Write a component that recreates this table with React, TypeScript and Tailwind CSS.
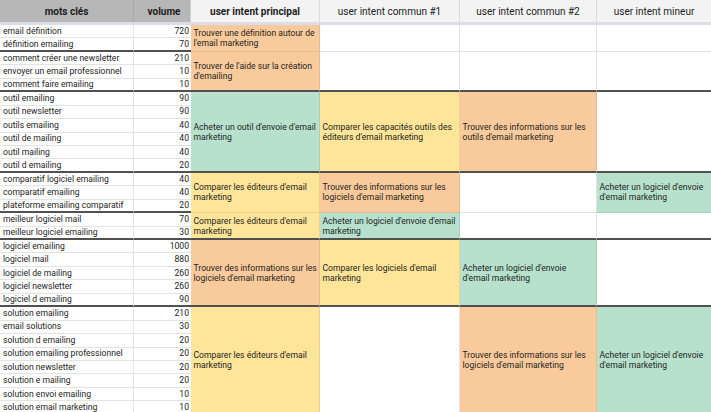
import React from "react";

type Span = { start: number; end: number; color?: "o" | "y" | "g"; lines?: [string, string] };

const rows: [string, string][] = [
  ["email définition", "720"],
  ["définition emailing", "70"],
  ["comment créer une newsletter", "210"],
  ["envoyer un email professionnel", "10"],
  ["comment faire emailing", "10"],
  ["outil emailing", "90"],
  ["outil newsletter", "90"],
  ["outils emailing", "40"],
  ["outil de mailing", "40"],
  ["outil mailing", "40"],
  ["outil d emailing", "20"],
  ["comparatif logiciel emailing", "40"],
  ["comparatif emailing", "40"],
  ["plateforme emailing comparatif", "20"],
  ["meilleur logiciel mail", "70"],
  ["meilleur logiciel emailing", "30"],
  ["logiciel emailing", "1000"],
  ["logiciel mail", "880"],
  ["logiciel de mailing", "260"],
  ["logiciel newsletter", "260"],
  ["logiciel d emailing", "90"],
  ["solution emailing", "210"],
  ["email solutions", "30"],
  ["solution d emailing", "20"],
  ["solution emailing professionnel", "20"],
  ["solution newsletter", "20"],
  ["solution e mailing", "20"],
  ["solution envoi emailing", "10"],
  ["solution email marketing", "10"],
];

const darkAll = [5, 11, 16, 21];
const darkLeft = [2, 5, 11, 14, 16, 21];

const cols: Span[][] = [
  [
    { start: 1, end: 2, color: "o", lines: ["Trouver une définition autour de", "l'email marketing"] },
    { start: 3, end: 5, color: "o", lines: ["Trouver de l'aide sur la création", "d'emailing"] },
    { start: 6, end: 11, color: "g", lines: ["Acheter un outil d'envoie d'email", "marketing"] },
    { start: 12, end: 14, color: "y", lines: ["Comparer les éditeurs d'email", "marketing"] },
    { start: 15, end: 16, color: "y", lines: ["Comparer les éditeurs d'email", "marketing"] },
    { start: 17, end: 21, color: "o", lines: ["Trouver des informations sur les", "logiciels d'email marketing"] },
    { start: 22, end: 29, color: "y", lines: ["Comparer les éditeurs d'email", "marketing"] },
  ],
  [
    { start: 1, end: 2 },
    { start: 3, end: 5 },
    { start: 6, end: 11, color: "y", lines: ["Comparer les capacités outils des", "éditeurs d'email marketing"] },
    { start: 12, end: 14, color: "o", lines: ["Trouver des informations sur les", "logiciels d'email marketing"] },
    { start: 15, end: 16, color: "g", lines: ["Acheter un logiciel d'envoie d'email", "marketing"] },
    { start: 17, end: 21, color: "y", lines: ["Comparer les logiciels d'email", "marketing"] },
    { start: 22, end: 29 },
  ],
  [
    { start: 1, end: 2 },
    { start: 3, end: 5 },
    { start: 6, end: 11, color: "o", lines: ["Trouver des informations sur les", "outils d'email marketing"] },
    { start: 12, end: 14 },
    { start: 15, end: 16 },
    { start: 17, end: 21, color: "g", lines: ["Acheter un logiciel d'envoie", "d'email marketing"] },
    { start: 22, end: 29, color: "o", lines: ["Trouver des informations sur les", "logiciels d'email marketing"] },
  ],
  [
    { start: 1, end: 2 },
    { start: 3, end: 5 },
    { start: 6, end: 11 },
    { start: 12, end: 14, color: "g", lines: ["Acheter un logiciel d'envoie", "d'email marketing"] },
    { start: 15, end: 16 },
    { start: 17, end: 21 },
    { start: 22, end: 29, color: "g", lines: ["Acheter un logiciel d'envoie", "d'email marketing"] },
  ],
];

const bg = (c?: string) =>
  c === "o" ? "bg-[#f9cb9c]" : c === "y" ? "bg-[#ffe599]" : c === "g" ? "bg-[#b7e1cd]" : "bg-white";

export default function App() {
  return (
    <div
      className="w-[711px] h-[412px] overflow-hidden bg-white text-[#1d1d1d]"
      style={{ fontFamily: "Roboto, 'Liberation Sans', sans-serif" }}
    >
      <div className="grid grid-cols-[134px_57px_129px_140px_137px_114px] h-[22px] text-[10px] border-b-[3px] border-[#dadfe6] box-content">
        <div className="bg-[#b7b7b7] border-r border-[#a9a9a9] flex items-center justify-center font-bold">mots clés</div>
        <div className="bg-[#b7b7b7] border-r border-[#cfcfcf] flex items-center justify-center font-bold pl-[4px]">volume</div>
        <div className="bg-[#f3f3f3] border-r border-[#dcdcdc] flex items-center justify-center font-bold">user intent principal</div>
        <div className="bg-[#f3f3f3] border-r border-[#dcdcdc] flex items-center justify-center">user intent commun #1</div>
        <div className="bg-[#f3f3f3] border-r border-[#dcdcdc] flex items-center justify-center">user intent commun #2</div>
        <div className="bg-[#f3f3f3] flex items-center justify-center">user intent mineur</div>
      </div>
      <div className="grid grid-cols-[134px_57px_129px_140px_137px_114px] grid-rows-[repeat(29,13.44px)] text-[8.6px]">
        {rows.map(([k, v], i) => {
          const r = i + 1;
          const dark = darkLeft.includes(r);
          const b = dark ? "border-b-2 border-b-[#505050]" : "border-b border-b-[#e3e3e3]";
          return (
            <React.Fragment key={r}>
              <div
                className={`flex items-center pl-[3px] whitespace-nowrap border-r border-r-[#e3e3e3] ${b}`}
                style={{ gridRow: r, gridColumn: 1 }}
              >
                {k}
              </div>
              <div
                className={`flex items-center justify-end pr-[2px] ${b}`}
                style={{ gridRow: r, gridColumn: 2 }}
              >
                {v}
              </div>
            </React.Fragment>
          );
        })}
        {cols.map((col, ci) =>
          col.map((s) => {
            const dark = darkAll.includes(s.end);
            const b = dark ? "border-b-2 border-b-[#505050]" : s.color ? "border-b border-b-black/[0.07]" : "border-b border-b-[#e3e3e3]";
            const rr = s.color ? "border-r border-r-black/[0.07]" : "border-r border-r-[#e3e3e3]";
            return (
              <div
                key={`${ci}-${s.start}`}
                className={`flex items-center px-[2.5px] leading-[10px] whitespace-nowrap ${bg(s.color)} ${b} ${ci < 3 ? rr : ""}`}
                style={{ gridRow: `${s.start} / ${s.end + 1}`, gridColumn: ci + 3 }}
              >
                {s.lines && (
                  <div>
                    {s.lines[0]}
                    <br />
                    {s.lines[1]}
                  </div>
                )}
              </div>
            );
          })
        )}
      </div>
    </div>
  );
}
